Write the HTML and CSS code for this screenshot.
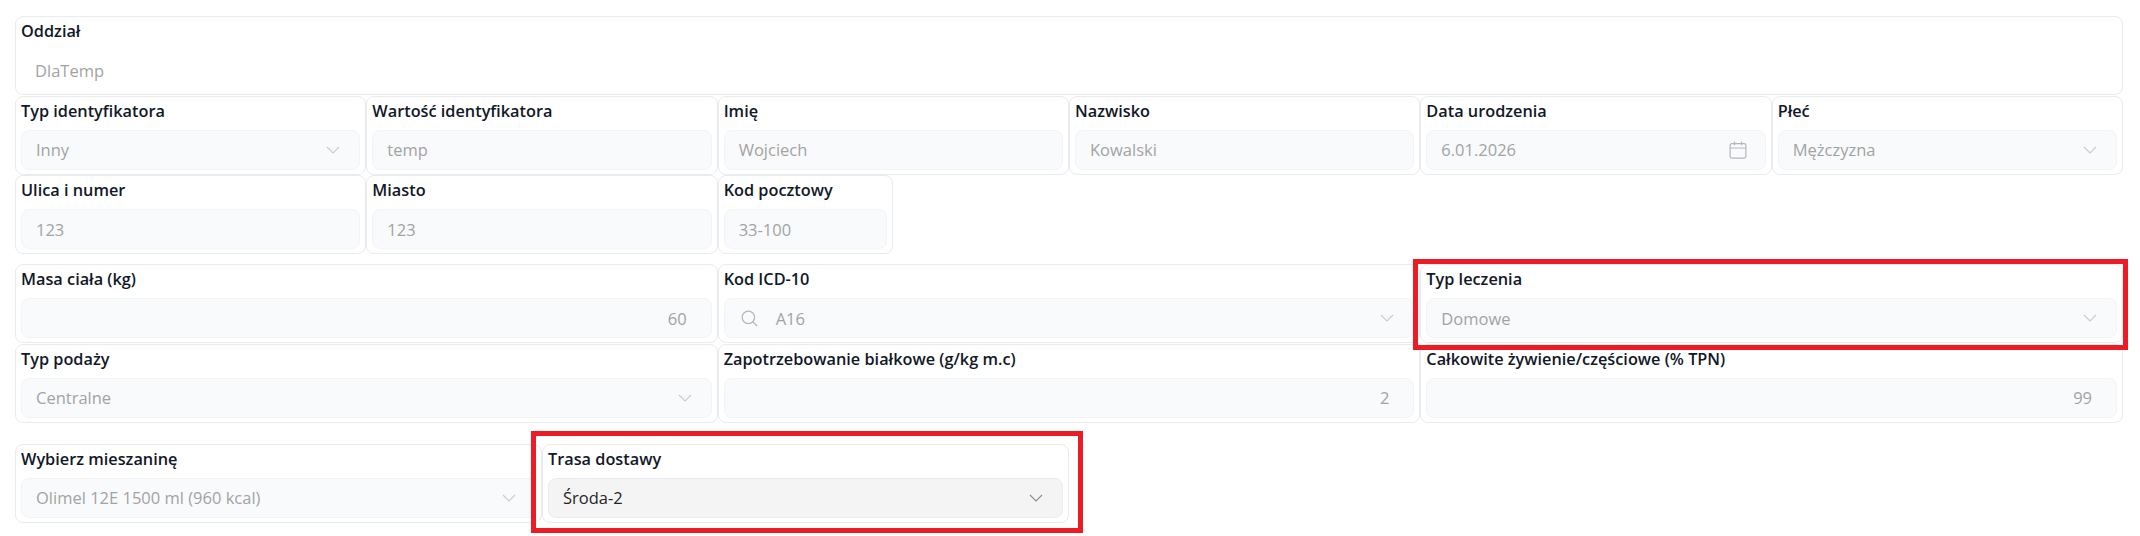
FILE: index.html
```html
<!DOCTYPE html>
<html lang="pl">

<head>
    <meta charset="UTF-8">
    <meta name="viewport" content="width=device-width, initial-scale=1.0">
    <title>Dane pacjenta</title>
    <link rel="stylesheet" href="styles.css">
</head>

<body>
    <svg class="icon-defs" width="0" height="0">
        <symbol id="chevron" viewBox="0 0 16 16">
            <path d="M2 5l6 6 6-6" fill="none" stroke="currentColor" stroke-width="1.1" />
        </symbol>
    </svg>

    <form class="form">
        <section class="grid">
            <div class="card span-12">
                <label>Oddział</label>
                <div class="input plain">DlaTemp</div>
            </div>
            <div class="card span-2">
                <label>Typ identyfikatora</label>
                <div class="input select">Inny<svg class="chevron"><use href="#chevron" /></svg></div>
            </div>
            <div class="card span-2">
                <label>Wartość identyfikatora</label>
                <div class="input">temp</div>
            </div>
            <div class="card span-2">
                <label>Imię</label>
                <div class="input">Wojciech</div>
            </div>
            <div class="card span-2">
                <label>Nazwisko</label>
                <div class="input">Kowalski</div>
            </div>
            <div class="card span-2">
                <label>Data urodzenia</label>
                <div class="input select">6.01.2026
                    <svg class="calendar" viewBox="0 0 18 18" fill="none" stroke="currentColor" stroke-width="1.2">
                        <rect x="1.1" y="2.6" width="15.8" height="14.6" rx="1.8" />
                        <path d="M1.1 7h15.8M5.5 .6v3.6M12.5 .6v3.6" />
                    </svg>
                </div>
            </div>
            <div class="card span-2">
                <label>Płeć</label>
                <div class="input select">Mężczyzna<svg class="chevron"><use href="#chevron" /></svg></div>
            </div>
            <div class="card span-2">
                <label>Ulica i numer</label>
                <div class="input">123</div>
            </div>
            <div class="card span-2">
                <label>Miasto</label>
                <div class="input">123</div>
            </div>
            <div class="card span-1">
                <label>Kod pocztowy</label>
                <div class="input">33-100</div>
            </div>
        </section>

        <section class="grid">
            <div class="card span-4">
                <label>Masa ciała (kg)</label>
                <div class="input number">60</div>
            </div>
            <div class="card span-4">
                <label>Kod ICD-10</label>
                <div class="input select">
                    <span class="with-icon">
                        <svg class="search" viewBox="0 0 18 18" fill="none" stroke="currentColor" stroke-width="1.3">
                            <circle cx="7.8" cy="7.8" r="6.6" />
                            <path d="m12.6 12.6 4.4 4.4" />
                        </svg>A16
                    </span>
                    <svg class="chevron"><use href="#chevron" /></svg>
                </div>
            </div>
            <div class="card span-4 marked-wide">
                <label>Typ leczenia</label>
                <div class="input select">Domowe<svg class="chevron"><use href="#chevron" /></svg></div>
            </div>
            <div class="card span-4">
                <label>Typ podaży</label>
                <div class="input select">Centralne<svg class="chevron"><use href="#chevron" /></svg></div>
            </div>
            <div class="card span-4">
                <label>Zapotrzebowanie białkowe (g/kg m.c)</label>
                <div class="input number">2</div>
            </div>
            <div class="card span-4">
                <label>Całkowite żywienie/częściowe (% TPN)</label>
                <div class="input number">99</div>
            </div>
        </section>

        <section class="grid">
            <div class="card span-3">
                <label>Wybierz mieszaninę</label>
                <div class="input select">Olimel 12E 1500 ml (960 kcal)<svg class="chevron"><use href="#chevron" /></svg></div>
            </div>
            <div class="card span-3 marked-route">
                <label>Trasa dostawy</label>
                <div class="input select active">Środa-2<svg class="chevron"><use href="#chevron" /></svg></div>
            </div>
        </section>
    </form>
</body>

</html>
```

FILE: styles.css
```css
body {
    margin: 0;
    height: 536px;
    overflow: hidden;
    font-family: "Open Sans", "Noto Sans", Arial, sans-serif;
    background-color: #fff;
}

.icon-defs {
    position: absolute;
}

.form {
    padding: 16px 17px 0 15px;
}

.grid {
    display: grid;
    grid-template-columns: repeat(12, minmax(0, 1fr));
    row-gap: 0.5px;
    margin-bottom: 10px;
}

.grid:nth-child(2) {
    margin-bottom: 21px;
}

.span-1 {
    grid-column: span 1;
}

.span-2 {
    grid-column: span 2;
}

.span-3 {
    grid-column: span 3;
}

.span-4 {
    grid-column: span 4;
}

.span-12 {
    grid-column: span 12;
}

.card {
    position: relative;
    box-sizing: border-box;
    height: 79px;
    padding: 4px 5px 5px;
    border: 1px solid #e9ebee;
    border-radius: 8px;
    background-color: #fff;
}

.card label {
    display: block;
    height: 29px;
    font-size: 16.3px;
    font-weight: 600;
    line-height: 20px;
    color: #111827;
    white-space: nowrap;
}

.input {
    display: flex;
    align-items: center;
    box-sizing: border-box;
    height: 40px;
    padding: 0 18px 0 14px;
    border: 1px solid #f3f4f6;
    border-radius: 8px;
    font-size: 16.5px;
    color: #a3a3a3;
    white-space: nowrap;
    background-color: #f9fafb;
}

.plain {
    border: none;
    background-color: #fff;
}

.select {
    justify-content: space-between;
}

.number {
    justify-content: flex-end;
    padding-right: 24px;
}

.active {
    color: #262626;
    background-color: #f4f4f5;
    border-color: #ececee;
}

.chevron {
    width: 16px;
    height: 16px;
    color: #c8cbd0;
}

.active .chevron {
    color: #8c8c8c;
}

.calendar {
    width: 18px;
    height: 18px;
    color: #b4b7bb;
}

.with-icon {
    display: flex;
    align-items: center;
    gap: 18px;
    margin-left: 2px;
}

.search {
    width: 17px;
    height: 17px;
    color: #b4b7bb;
}

/* red annotation frames drawn over the cards */
.marked-wide,
.marked-route {
    z-index: 1;
}

.marked-wide::after,
.marked-route::after {
    content: "";
    position: absolute;
    border: 5px solid #ed1c24;
    pointer-events: none;
}

.marked-wide::after {
    inset: -6px -6px -8px -8px;
}

.marked-route::after {
    inset: -14px -15px -11px -12px;
}
```
